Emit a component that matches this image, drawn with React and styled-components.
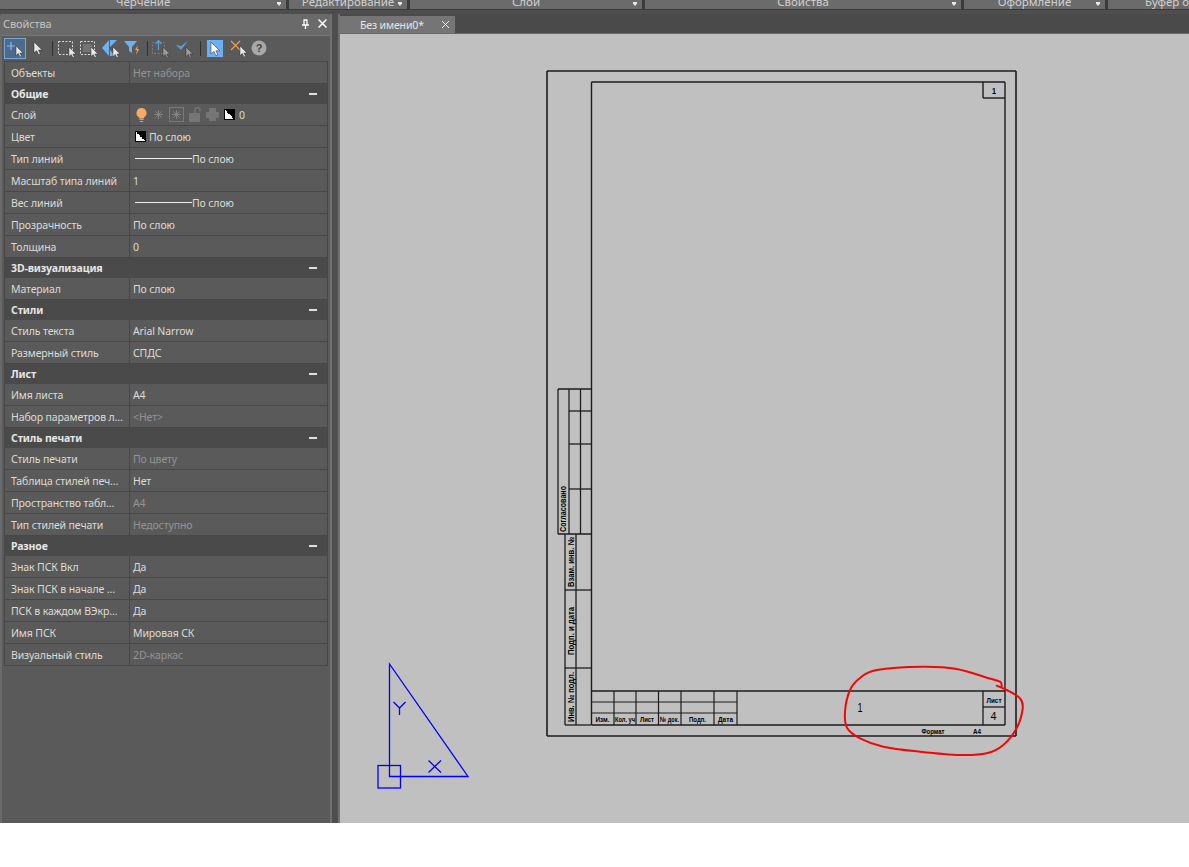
import React from "react";
import styled, { createGlobalStyle } from "styled-components";

const Global = createGlobalStyle`
  html, body { margin: 0; padding: 0; background: #fff; }
  body { font-family: "Noto Sans", "Open Sans", sans-serif; font-size: 10.5px; letter-spacing: -0.12px; }
`;

const Page = styled.div`
  width: 1189px; height: 823px; display: flex; flex-direction: column; overflow: hidden; background: #4c4c4c;
`;
const Ribbon = styled.div`
  height: 10px; flex: none; display: flex; gap: 3px; background: #3c3c3c; border-bottom: 1px solid #3a3a3a; box-sizing: border-box; overflow: hidden;
`;
const RibbonPanel = styled.div`
  flex: ${p => p.$grow ? "1" : `0 0 ${p.$w}px`}; position: relative; height: 9px; background: #6b6b6b; color: #cfcfcf; font-size: 11.5px;
  display: flex; align-items: flex-end; justify-content: ${p => p.$pad ? "flex-start" : "center"}; padding-left: ${p => p.$pad || 0}px; box-sizing: border-box;
  line-height: 15px; overflow: hidden; white-space: nowrap; letter-spacing: 0;
`;
const RibbonArrow = styled.i`
  position: absolute; right: 5px; top: 2px; width: 4px; height: 4px; background: #e8e8e8; clip-path: polygon(0 0, 100% 0, 100% 40%, 50% 100%, 0 40%);
`;
const Main = styled.div`flex: 1; display: flex; min-height: 0; background: #4e4e4e; padding-top: 4px;`;
const Palette = styled.aside`
  width: 330px; flex: none; display: flex; flex-direction: column; background: #6a6a6a; border-radius: 2px 2px 0 0;
`;
const PaletteTitle = styled.div`
  height: 21px; flex: none; display: flex; align-items: center; padding: 0 3px 2px; color: #c4c4c4; font-size: 11px; justify-content: space-between; box-sizing: border-box;
`;
const TitleIcons = styled.div`display: flex; align-items: center; gap: 8px; color: #fff;`;
const PaletteBody = styled.div`
  flex: 1; background: #5a5a5a; margin-left: 2px; padding: 1px 2px 0 2px; border-top: 1px solid #767676; display: flex; flex-direction: column;
`;
const Toolbar = styled.div`height: 24px; flex: none; display: flex; align-items: center; padding-bottom: 2px; box-sizing: border-box;`;
const ToolBtn = styled.div`
  width: ${p => p.$w || 22}px; height: ${p => p.$h || 21}px; flex: none; display: flex; align-items: center; justify-content: center; box-sizing: border-box;
  background: ${p => p.$fill || "transparent"};
  ${p => p.$active ? "border: 1px solid #7aa7d8; background: #4b6a8c;" : ""}
  margin-right: ${p => p.$mr || 0}px;
`;
const ToolSep = styled.div`width: 1px; height: 15px; background: #2f2f2f; margin: 0 ${p => p.$r}px 0 ${p => p.$l}px; flex: none;`;
const Table = styled.div`width: 324px; display: flex; flex-direction: column; border: 1px solid #474747; border-bottom: none; box-sizing: border-box;`;
const Row = styled.div`
  height: 22px; box-sizing: border-box; display: grid; grid-template-columns: 125px 1fr; border-bottom: 1px solid #474747; color: #dcdcd4;
`;
const Label = styled.div`
  padding: 0 0 0 6px; display: flex; align-items: center; border-right: 1px solid #474747; white-space: nowrap; overflow: hidden;
`;
const Value = styled.div`
  padding: 0 0 0 3px; display: flex; align-items: center; gap: 3px; color: ${p => p.$dim ? "#949494" : "#dcdcd4"}; white-space: nowrap;
`;
const Section = styled.div`
  height: 20px; box-sizing: border-box; background: #4a4a4a; display: flex; align-items: center; justify-content: space-between;
  padding: 0 6px; font-weight: 700; color: #e6e6e6; line-height: 20px;
`;
const Minus = styled.i`width: 8px; height: 2px; background: #e0e0e0; margin-right: 4px;`;
const Swatch = styled.i`
  width: 11px; height: 11px; flex: none; margin-left: ${p => p.$ml || 0}px; background: linear-gradient(to top right, #fff 50%, #000 50%); display: block; border: 1px solid #000; box-sizing: border-box;
`;
const LineSample = styled.i`width: 57px; height: 1px; background: #f0f0f0; margin-left: 2px; margin-right: -3px; flex: none;`;
const LayerIcons = styled.div`display: flex; align-items: center; gap: 5px; margin-left: 2px; margin-right: 1px;`;
const Divider = styled.div`
  width: 10px; flex: none; box-sizing: border-box; background: #4e4e4e; border-left: 2px solid #707070; border-right: 2px solid #707070;
`;
const Workspace = styled.section`flex: 1; display: flex; flex-direction: column; min-width: 0; background: #4a4a4a;`;
const TabBar = styled.div`
  height: 20px; flex: none; display: flex; box-sizing: border-box; padding-top: 2px; border-bottom: 1px solid #6a6a6a; background: #4a4a4a;
`;
const Tab = styled.div`
  width: 115px; height: 17px; box-sizing: border-box; background: #757575; color: #e6e6e6; padding: 0 5px 0 20px; display: flex; align-items: center; justify-content: space-between; font-size: 10.5px;
`;
const Canvas = styled.svg`flex: 1; display: block; width: 849px; background: #c0c0c0;`;

const Bulb = () => (
  <svg width="13" height="16" viewBox="0 0 13 16"><path d="M6.500 1a5 5 0 0 1 3 9c-.6.5-.8 1-.8 1.500H4.300c0-.5-.2-1-.8-1.500a5 5 0 0 1 3-9z" fill="#f6ab62"/><path d="M4.500 12.500h4M4.800 14.500h3.400" stroke="#c9a777" strokeWidth="1.200"/></svg>
);
const Sun = () => (
  <svg width="11" height="11" viewBox="0 0 11 11" stroke="#858585" strokeWidth="1"><path d="M5.500 1v9M1 5.500h9M2.300 2.300l6.400 6.400M8.700 2.300L2.300 8.700"/></svg>
);
const Frozen = () => (
  <svg width="15" height="15" viewBox="0 0 15 15" stroke="#858585" fill="none"><rect x=".5" y=".5" width="14" height="14" stroke="#7a7a7a"/><path d="M7.500 3v9M3 7.500h9M4.300 4.300l6.400 6.400M10.700 4.300L4.300 10.700"/></svg>
);
const Lock = () => (
  <svg width="12" height="15" viewBox="0 0 12 15"><rect x="0" y="6" width="11" height="9" rx="1" fill="#767676"/><path d="M6 6V3a2.500 2.500 0 0 1 5 0v1" stroke="#767676" strokeWidth="1.400" fill="none"/></svg>
);
const Printer = () => (
  <svg width="13" height="13" viewBox="0 0 13 13" fill="#767676"><rect x="3" y="0" width="7" height="4"/><rect x="0" y="4" width="13" height="6" rx="1"/><rect x="3" y="9" width="7" height="4"/></svg>
);
const Cursor = ({ x = 0, y = 0, s = 1, c = "#e8e8e8" }) => (
  <path transform={`translate(${x} ${y}) scale(${s})`} d="M0 0L0 9.500L2.300 7.500L4 11L5.500 10.300L3.900 7H7z" fill={c} stroke="#222" strokeWidth=".4"/>
);
const Icon = ({ children, w = 20 }) => <svg width={w} height="18" viewBox="0 0 20 18">{children}</svg>;

const Pin = () => (
  <svg width="9" height="10" viewBox="0 0 9 10" fill="none" stroke="#fff" strokeWidth="1.300"><path d="M2.500 1h4M3 1v5M6 1v5M1 6h7M4.500 6v4"/></svg>
);
const Close = () => (
  <svg width="9" height="9" viewBox="0 0 9 9" stroke="#fff" strokeWidth="1.500"><path d="M.5.500l8 8M8.500.500l-8 8"/></svg>
);

const tools = (
  <Toolbar>
    <ToolBtn $active><Icon>
      <path d="M6 3v8M2 7h8" stroke="#7cc0ff" strokeWidth="1.200"/><Cursor x={11} y={7}/>
    </Icon></ToolBtn>
    <ToolBtn><Icon><Cursor x={7} y={3} s={1.150}/></Icon></ToolBtn>
    <ToolSep $l={4} $r={2}/>
    <ToolBtn><Icon>
      <rect x="2.500" y="2.500" width="14" height="13" fill="none" stroke="#d8d8d8" strokeDasharray="2 1.500"/><Cursor x={13} y={8}/>
    </Icon></ToolBtn>
    <ToolBtn><Icon>
      <rect x="2.500" y="2.500" width="14" height="13" fill="none" stroke="#d8d8d8" strokeDasharray="2 1.500"/><path d="M5 5h9v8H5z" fill="#8a8a8a" opacity=".55"/><Cursor x={13} y={8}/>
    </Icon></ToolBtn>
    <ToolBtn><Icon>
      <path d="M2 9L9 1v16zM10 1h7l-7 7zM10 11l5 6h-5z" fill="#6fb0f0"/><Cursor x={13} y={8}/>
    </Icon></ToolBtn>
    <ToolBtn $w={23}><Icon>
      <path d="M1 2h13L9 8v6l-3-2V8z" fill="#6fb0f0"/><path d="M15 6l-3 5h2l-1 5 3-6h-2z" fill="#e8a860"/>
    </Icon></ToolBtn>
    <ToolSep $l={3} $r={1}/>
    <ToolBtn><Icon>
      <rect x="2.500" y="3.500" width="12" height="11" fill="none" stroke="#7d7d7d" strokeDasharray="2 1.500"/><path d="M8.500 11V2M5.500 5l3-3.500 3 3.500" fill="none" stroke="#5f9ad6" strokeWidth="1.300"/><Cursor x={13} y={8} c="#9c9c9c"/>
    </Icon></ToolBtn>
    <ToolBtn $w={26}><Icon>
      <path d="M2 6l5 5 7-9-7 5z" fill="#5f9ad6"/><Cursor x={12} y={8} c="#9c9c9c"/>
    </Icon></ToolBtn>
    <ToolSep $l={3} $r={6}/>
    <ToolBtn $w={16} $h={17} $mr={6} $fill="#70aef2"><svg width="16" height="17" viewBox="0 0 16 17"><Cursor x={4} y={2} s={1.250} c="#fff"/></svg></ToolBtn>
    <ToolBtn $w={19}><svg width="19" height="18" viewBox="0 0 19 18">
      <path d="M2 2l9 9M11 2l-9 9" stroke="#f0a058" strokeWidth="1.100"/><Cursor x={11} y={7}/>
    </svg></ToolBtn>
    <ToolBtn $w={22}><svg width="16" height="16" viewBox="0 0 16 16"><circle cx="8" cy="8" r="7.500" fill="#a8a8a8"/><text x="8" y="12" textAnchor="middle" fontSize="11" fontWeight="700" fontFamily="Liberation Sans" fill="#444">?</text></svg></ToolBtn>
  </Toolbar>
);

const data = [
  { l: "Объекты", v: "Нет набора", dim: true },
  { s: "Общие" },
  { l: "Слой", kind: "layer" },
  { l: "Цвет", kind: "color", v: "По слою" },
  { l: "Тип линий", kind: "line", v: "По слою" },
  { l: "Масштаб типа линий", v: "1" },
  { l: "Вес линий", kind: "line", v: "По слою" },
  { l: "Прозрачность", v: "По слою" },
  { l: "Толщина", v: "0" },
  { s: "3D-визуализация" },
  { l: "Материал", v: "По слою" },
  { s: "Стили" },
  { l: "Стиль текста", v: "Arial Narrow" },
  { l: "Размерный стиль", v: "СПДС" },
  { s: "Лист" },
  { l: "Имя листа", v: "A4" },
  { l: "Набор параметров л...", v: "<Нет>", dim: true },
  { s: "Стиль печати" },
  { l: "Стиль печати", v: "По цвету", dim: true },
  { l: "Таблица стилей печ...", v: "Нет" },
  { l: "Пространство табл...", v: "A4", dim: true },
  { l: "Тип стилей печати", v: "Недоступно", dim: true },
  { s: "Разное" },
  { l: "Знак ПСК Вкл", v: "Да" },
  { l: "Знак ПСК в начале ...", v: "Да" },
  { l: "ПСК в каждом ВЭкр...", v: "Да" },
  { l: "Имя ПСК", v: "Мировая СК" },
  { l: "Визуальный стиль", v: "2D-каркас", dim: true },
];

const renderValue = d => {
  if (d.kind === "layer") return (
    <Value>
      <LayerIcons><Bulb/><Sun/><Frozen/><Lock/><Printer/><Swatch/></LayerIcons>
      <span>0</span>
    </Value>
  );
  if (d.kind === "color") return <Value><Swatch $ml={2}/><span>{d.v}</span></Value>;
  if (d.kind === "line") return <Value><LineSample/><span>{d.v}</span></Value>;
  return <Value $dim={d.dim}>{d.v}</Value>;
};

const lines = [
  [547,71,1016,71,1.6],[547,736,1016,736,1.6],[547,71,547,736,1.6],[1016,71,1016,736,1.6],
  [591.5,82,1005,82,1.4],[591.5,725,1005,725,1.4],[591.5,82,591.5,725,1.4],[1005,82,1005,725,1.4],
  [983,82,983,98,1.4],[983,98,1005,98,1.4],
  [558,389,591,389,1.3],[558,534,591,534,1.3],[558,389,558,534,1.3],[569,389,569,534,1.3],[580.5,389,580.5,534,1.3],
  [569,411,591,411,1.3],[569,444,591,444,1.3],[569,489,591,489,1.3],
  [565,534,565,725,1.3],[576,534,576,725,1.3],[565,590,591,590,1.3],[565,668,591,668,1.3],[565,725,591,725,1.3],
  [591,691,1005,691,1.3],[591,702,737,702,1.1],[591,713,737,713,1.1],
  [614,691,614,725,1.2],[636,691,636,725,1.2],[658.5,691,658.5,725,1.2],[681,691,681,725,1.2],[714,691,714,725,1.2],[737,691,737,725,1.2],
  [983,691,983,725,1.3],[983,707,1005,707,1.3],
];

const DText = ({ x, y, w, size = 7, rotate, weight = 700, children }) => (
  <text
    x={x} y={y} fontSize={size} fontWeight={weight} fontFamily="Liberation Sans" fill="#000" textAnchor="middle" letterSpacing="0"
    textLength={w} lengthAdjust="spacingAndGlyphs" transform={rotate ? `rotate(-90 ${x} ${y})` : undefined}
  >{children}</text>
);

const redPts = [
  [1001.7,686.7],[1000,681.7],[986.7,677.7],[956.7,669],[923,666.7],[876.7,670],[860,678],[850,690],[845,711.7],
  [847.3,728.3],[860,738.3],[883.3,746.7],[920,751.7],[960,755],[986.7,753.3],[1003.3,745],[1016.7,728],[1022.7,708.3],
  [1020,698.3],[1006.7,690],[996.7,685.7],
];
const smooth = pts => {
  let d = `M${pts[0][0]} ${pts[0][1]}`;
  for (let i = 0; i < pts.length - 1; i++) {
    const p0 = pts[Math.max(0, i - 1)], p1 = pts[i], p2 = pts[i + 1], p3 = pts[Math.min(pts.length - 1, i + 2)];
    const c1 = [p1[0] + (p2[0] - p0[0]) / 6, p1[1] + (p2[1] - p0[1]) / 6];
    const c2 = [p2[0] - (p3[0] - p1[0]) / 6, p2[1] - (p3[1] - p1[1]) / 6];
    d += `C${c1[0]} ${c1[1]} ${c2[0]} ${c2[1]} ${p2[0]} ${p2[1]}`;
  }
  return d;
};

export default function App() {
  return (
    <>
      <Global/>
      <Page>
        <Ribbon>
          <RibbonPanel $w={286}>Черчение<RibbonArrow/></RibbonPanel>
          <RibbonPanel $w={118}>Редактирование<RibbonArrow/></RibbonPanel>
          <RibbonPanel $w={232}>Слой<RibbonArrow/></RibbonPanel>
          <RibbonPanel $w={316}>Свойства<RibbonArrow/></RibbonPanel>
          <RibbonPanel $w={141}>Оформление<RibbonArrow/></RibbonPanel>
          <RibbonPanel $grow $pad={37}>Буфер обмена</RibbonPanel>
        </Ribbon>
        <Main>
          <Palette>
            <PaletteTitle>
              <span>Свойства</span>
              <TitleIcons><Pin/><Close/></TitleIcons>
            </PaletteTitle>
            <PaletteBody>
              {tools}
              <Table>
                {data.map((d, i) => d.s
                  ? <Section key={i}>{d.s}<Minus/></Section>
                  : <Row key={i}><Label>{d.l}</Label>{renderValue(d)}</Row>)}
              </Table>
            </PaletteBody>
          </Palette>
          <Divider/>
          <Workspace>
            <TabBar>
              <Tab>
                <span>Без имени0*</span>
                <svg width="9" height="9" viewBox="0 0 9 9" stroke="#e8e8e8" strokeWidth="1"><path d="M1 1l7 7M8 1L1 8"/></svg>
              </Tab>
            </TabBar>
            <Canvas viewBox="340 34 849 789" preserveAspectRatio="xMinYMin slice">
              {lines.map((l, i) => (
                <line key={i} x1={l[0]} y1={l[1]} x2={l[2]} y2={l[3]} stroke="#1c1c1c" strokeWidth={l[4]}/>
              ))}
              <DText x={994} y={94} w={4} size={9} weight={700}>1</DText>
              <DText x={566} y={509} w={46} size={9} rotate>Согласовано</DText>
              <DText x={573.5} y={562} w={50} size={9} rotate>Взам. инв. №</DText>
              <DText x={573.5} y={631} w={48} size={9} rotate>Подп. и дата</DText>
              <DText x={573.5} y={697} w={50} size={9} rotate>Инв. № подл.</DText>
              <DText x={602.5} y={722} w={14} size={7.5}>Изм.</DText>
              <DText x={625} y={722} w={20} size={7.5}>Кол. уч</DText>
              <DText x={647} y={722} w={14} size={7.5}>Лист</DText>
              <DText x={669.5} y={722} w={19} size={7.5}>№ док.</DText>
              <DText x={697.5} y={722} w={17} size={7.5}>Подп.</DText>
              <DText x={725.5} y={722} w={15} size={7.5}>Дата</DText>
              <DText x={860} y={712} w={5} size={12} weight={400}>1</DText>
              <DText x={994} y={702.5} w={15} size={8}>Лист</DText>
              <DText x={993.5} y={720} w={6} size={10} weight={400}>4</DText>
              <DText x={933} y={733.5} w={23} size={7.5}>Формат</DText>
              <DText x={977} y={733.5} w={8} size={7.5}>А4</DText>

              <g fill="none" stroke="#0000ff" strokeWidth="1.3">
                <path d="M389.5 664L389.5 776.5L468 776.5Z"/>
                <rect x="378" y="765.5" width="22.5" height="22.5"/>
                <path d="M393.5 702L399.5 708L405.5 702M399.5 708V715"/>
                <path d="M428.5 760.5L441 772.5M441 760.5L428.5 772.5"/>
              </g>
              <path d={smooth(redPts)} fill="none" stroke="#f00808" strokeWidth="2" strokeLinecap="round"/>
            </Canvas>
          </Workspace>
        </Main>
      </Page>
    </>
  );
}
